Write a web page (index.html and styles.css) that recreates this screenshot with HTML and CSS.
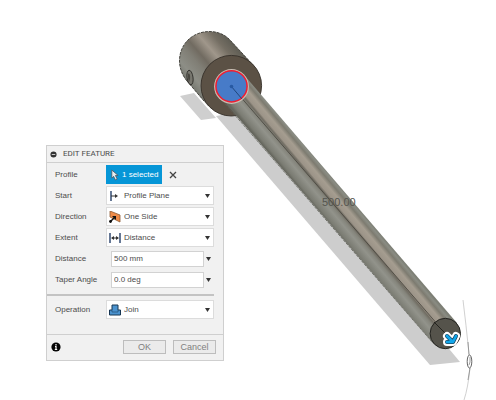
FILE: index.html
```
<!DOCTYPE html>
<html lang="en">
<head>
<meta charset="utf-8">
<meta name="viewport" content="width=device-width, initial-scale=1">
<title>Edit Feature</title>
<link rel="stylesheet" href="styles.css">
</head>
<body>
<main class="viewport">
  <svg class="model" viewBox="0 0 496 400" preserveAspectRatio="xMinYMin meet" role="img" aria-label="Shaft model, 500 mm extrusion">
    <defs>
      <linearGradient id="rod" gradientUnits="userSpaceOnUse" x1="326" y1="220" x2="351" y2="199">
        <stop offset="0" stop-color="#66675e"/>
        <stop offset=".08" stop-color="#7b7c73"/>
        <stop offset=".3" stop-color="#92938b"/>
        <stop offset=".42" stop-color="#85857c"/>
        <stop offset=".5" stop-color="#706c62"/>
        <stop offset=".56" stop-color="#9c9488"/>
        <stop offset=".72" stop-color="#a59d90"/>
        <stop offset=".84" stop-color="#7d7b70"/>
        <stop offset=".93" stop-color="#8a8c83"/>
        <stop offset="1" stop-color="#7c7e74"/>
      </linearGradient>
      <linearGradient id="collar" gradientUnits="userSpaceOnUse" x1="186" y1="82" x2="232" y2="42">
        <stop offset="0" stop-color="#74766e"/>
        <stop offset=".15" stop-color="#8d8e86"/>
        <stop offset=".35" stop-color="#807e75"/>
        <stop offset=".48" stop-color="#716b61"/>
        <stop offset=".66" stop-color="#a0978b"/>
        <stop offset=".84" stop-color="#746e63"/>
        <stop offset="1" stop-color="#5f5d54"/>
      </linearGradient>
    </defs>
    <path d="M180 96 194 93 216 118 201 120Z" fill="#cfcfcf"/>
    <path d="M216 116 240 112 445 344 460 362 430 365Z" fill="#cdcdcd"/>
    <path d="M187 81C177 69 177 52 187 41C198 29 219 28 230 40L255 67 208 106Z" fill="url(#collar)"/>
    <path d="M187 81C177 69 177 52 187 41C198 29 219 28 230 40L253 65M187 81 204 101" fill="none" stroke="#3b3a34" stroke-width=".9" stroke-dasharray="3 1"/>
    <ellipse cx="190" cy="77.500" rx="3" ry="7.300" fill="#77766e" stroke="#302f2b" stroke-width=".9" transform="rotate(-8 190 77.500)"/>
    <path d="M188 74c2-2 3 4 1 8c-1-2-1-5-1-8" fill="#484740"/>
    <circle cx="231.300" cy="85.700" r="30.300" fill="#5b5145" stroke="#353029" stroke-width=".9"/>
    <path d="M245 76 457 323 434 344 220 97Z" fill="url(#rod)"/>
    <path d="M220 98 433 343" stroke="#5d5e56" stroke-width=".8" stroke-dasharray="3 1"/>
    <path d="M232 87 445 333" stroke="#45423b" stroke-width=".8"/>
    <circle cx="231.500" cy="86.500" r="17.400" fill="#c9bdb2"/>
    <circle cx="231.500" cy="86.300" r="15.600" fill="#477bc8" stroke="#f01d30" stroke-width="1.500"/>
    <path d="M231 86 242 99" stroke="#20477e"/>
    <circle cx="231.500" cy="86.500" r="1.800" fill="#2859a2"/>
    <circle cx="445.300" cy="333.500" r="15.200" fill="#55534b" stroke="#242420"/>
    <path d="M434 322 446 334" stroke="#25241f"/>
    <g fill="none" stroke-linecap="round" stroke-linejoin="round">
      <path d="M447 336 452 341M447 342 453 342 456 336" stroke="#fff" stroke-width="8"/>
      <path d="M447 336 452 341M447 342 453 342 456 336" stroke="#1a4a66" stroke-width="4"/>
      <path d="M447 336 452 341M447 342 453 342 456 336" stroke="#12a6ea" stroke-width="2.600"/>
    </g>
    <path d="M463 300Q466 324 469 354M470 368Q468 388 464 400" fill="none" stroke="#bbb" stroke-width=".7"/>
    <path d="M468 342 469 355M470 368 468 380" stroke="#888" stroke-width=".8"/>
    <ellipse cx="469.500" cy="361.500" rx="2.300" ry="6.500" fill="#fff" stroke="#555" stroke-width=".9"/>
    <path d="M470 357v5l-1 3" fill="none" stroke="#777" stroke-width=".7"/>
    <text class="dimension" x="322" y="206">500.00</text>
  </svg>

  <form class="panel">
    <header class="panel-head">
      <svg class="collapse" viewBox="0 0 8 8" aria-hidden="true"><circle cx="4" cy="4" r="3.500" fill="#333"/><path d="M2 4h4" stroke="#ddd"/></svg>
      <h1>EDIT FEATURE</h1>
    </header>
    <div class="fields">
      <div class="row">
        <span class="name">Profile</span>
        <div class="selection">
          <button type="button" class="selected">
            <svg class="cursor" viewBox="0 0 10 13" aria-hidden="true"><path d="M2 1v9l2-2 2 4 2-1-2-4h3Z" fill="#e8edf0" stroke="#4a5660" stroke-width=".9"/></svg>
            1 selected
          </button>
          <button type="button" class="clear" aria-label="Clear selection"><svg viewBox="0 0 8 8" aria-hidden="true"><path d="M1 1 7 7M7 1 1 7" stroke="#444" stroke-width="1.300"/></svg></button>
        </div>
      </div>
      <div class="row">
        <label class="name" for="start">Start</label>
        <div class="combo">
          <svg class="icon" viewBox="0 0 12 12" aria-hidden="true"><path d="M2 1v10" stroke="#253f69" stroke-width="1.400"/><path d="M2 6h5" stroke="#333"/><path d="M6 4 9 6 6 8Z" fill="#333"/></svg>
          <select id="start"><option>Profile Plane</option></select>
          <svg class="arrow" viewBox="0 0 5 4" aria-hidden="true"><path d="M0 0h5L2.500 4Z"/></svg>
        </div>
      </div>
      <div class="row">
        <label class="name" for="direction">Direction</label>
        <div class="combo">
          <svg class="icon" viewBox="0 0 12 12" aria-hidden="true"><path d="M1 0 11 4V11L5 8 1 6Z" fill="#ef8b48" stroke="#8b5932" stroke-width=".8"/><path d="M1 11 6 6" stroke="#111" stroke-width="1.500"/><path d="M3 5 7 5 7 9Z" fill="#111"/><circle cx="1.500" cy="10.500" r="1.400" fill="#111"/></svg>
          <select id="direction"><option>One Side</option></select>
          <svg class="arrow" viewBox="0 0 5 4" aria-hidden="true"><path d="M0 0h5L2.500 4Z"/></svg>
        </div>
      </div>
      <div class="row">
        <label class="name" for="extent">Extent</label>
        <div class="combo">
          <svg class="icon" viewBox="0 0 12 12" aria-hidden="true"><path d="M1 1v10M11 1v10" stroke="#253f69" stroke-width="1.400"/><path d="M3 6h6" stroke="#333"/><path d="M5 4 2 6 5 8ZM7 4 10 6 7 8Z" fill="#333"/></svg>
          <select id="extent"><option>Distance</option></select>
          <svg class="arrow" viewBox="0 0 5 4" aria-hidden="true"><path d="M0 0h5L2.500 4Z"/></svg>
        </div>
      </div>
      <div class="row">
        <label class="name" for="distance">Distance</label>
        <div class="value">
          <input id="distance" type="text" value="500 mm">
          <button type="button" class="more" aria-label="Distance options"><svg class="arrow" viewBox="0 0 5 4" aria-hidden="true"><path d="M0 0h5L2.500 4Z"/></svg></button>
        </div>
      </div>
      <div class="row">
        <label class="name" for="taper">Taper Angle</label>
        <div class="value">
          <input id="taper" type="text" value="0.0 deg">
          <button type="button" class="more" aria-label="Taper angle options"><svg class="arrow" viewBox="0 0 5 4" aria-hidden="true"><path d="M0 0h5L2.500 4Z"/></svg></button>
        </div>
      </div>
    </div>
    <hr class="divider">
    <div class="fields operation">
      <div class="row">
        <label class="name" for="operation">Operation</label>
        <div class="combo">
          <svg class="icon" viewBox="0 0 12 12" aria-hidden="true"><path d="M3 1h6v5h2.500v5H.5V6H3Z" fill="#4b93cf" stroke="#173653"/><path d="M3 6v2h6V6" fill="none" stroke="#28577f" stroke-width=".8"/></svg>
          <select id="operation"><option>Join</option></select>
          <svg class="arrow" viewBox="0 0 5 4" aria-hidden="true"><path d="M0 0h5L2.500 4Z"/></svg>
        </div>
      </div>
    </div>
    <footer class="panel-foot">
      <svg class="info" viewBox="0 0 10 10" aria-hidden="true"><circle cx="5" cy="5" r="4.600" fill="#050505"/><path d="M5 2v1.400M4 4.500h1V7.500M3.800 7.500h2.400" fill="none" stroke="#fff" stroke-width="1.200"/></svg>
      <button type="submit" class="action">OK</button>
      <button type="button" class="action">Cancel</button>
    </footer>
  </form>
</main>
</body>
</html>
```
FILE: styles.css
```
* {
  box-sizing: border-box;
}

body {
  margin: 0;
  background: #fff;
  color: #4c4c4c;
  font: 8px/10px "Liberation Sans", Arial, sans-serif;
}

button,
input,
select {
  margin: 0;
  padding: 0;
  border: 0;
  border-radius: 0;
  background: none;
  color: inherit;
  font: inherit;
}

svg {
  display: block;
  flex: none;
}

.viewport {
  position: relative;
  min-height: 100vh;
  overflow: hidden;
}

.model {
  width: 100%;
}

.dimension {
  fill: #55554f;
  font-size: 11px;
}

/* Floating command dialog over the canvas */
.panel {
  position: absolute;
  top: 145px;
  left: 46px;
  width: 178px;
  border: 1px solid #cfcfcf;
  background: #f1f1f1;
}

.panel-head {
  display: flex;
  align-items: center;
  gap: 6px;
  height: 17px;
  padding-left: 3px;
  border-bottom: 1px solid #cfcfcf;
}

.panel-head h1 {
  margin: 0;
  font-family: Roboto, Arial, sans-serif;
  font-size: 8px;
  font-weight: 400;
}

.collapse {
  width: 7px;
  height: 7px;
}

.fields {
  display: grid;
  grid-template-columns: minmax(0, 1fr);
  gap: 2px;
  padding: 2px 9px 0 8px;
}

.row {
  display: grid;
  grid-template-columns: 51px minmax(0, 1fr);
  align-items: center;
  min-height: 19px;
}

.selection,
.value {
  display: flex;
  align-items: center;
}

.selected {
  display: flex;
  align-items: center;
  gap: 3px;
  width: 56px;
  height: 19px;
  padding-left: 4px;
  background: #0696d7;
  color: #fff;
  white-space: nowrap;
}

.cursor {
  width: 9px;
  height: 12px;
}

.clear {
  margin-left: 7px;
}

.clear svg {
  width: 8px;
  height: 8px;
}

.combo {
  display: flex;
  align-items: center;
  gap: 3px;
  height: 19px;
  padding: 0 3px 0 2px;
  border: 1px solid #dcdcdc;
  background: #fff;
}

.icon {
  width: 12px;
  height: 12px;
}

.combo select {
  flex: 1;
  min-width: 0;
  appearance: none;
}

.arrow {
  width: 5px;
  height: 4px;
  fill: #333;
}

.value {
  gap: 2px;
  padding: 0 3px 0 5px;
}

.value input {
  flex: 1;
  min-width: 0;
  height: 16px;
  padding-left: 2px;
  border: 1px solid #d2d2d2;
  background: #fff;
}

.divider {
  height: 2px;
  margin: 5px 9px 2px 0;
  border: 0;
  background: #c3c3c3;
}

.operation {
  padding-bottom: 15px;
}

.panel-foot {
  display: flex;
  align-items: center;
  gap: 7px;
  padding: 5px 7px 6px 4px;
  border-top: 1px solid #cfcfcf;
}

.info {
  width: 10px;
  height: 10px;
  margin-right: auto;
}

.action {
  width: 43px;
  height: 14px;
  border: 1px solid #bdbdbd;
  background: #ebebeb;
  color: #808080;
  font-size: 9px;
}
```
